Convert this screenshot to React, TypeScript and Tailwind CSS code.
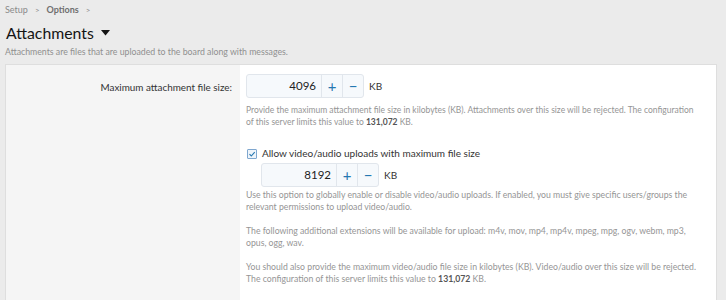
import React from "react";

const font = { fontFamily: 'Lato, "Open Sans", sans-serif' };

function NumberBox({ value }: { value: string }) {
  return (
    <div className="flex h-[24px] w-[118px] rounded-[3px] border border-[#e1e6ec] bg-[#f6f9fc]">
      <div className="flex flex-1 items-center justify-end pr-[5px] text-[11.5px] text-[#222]">{value}</div>
      <div className="flex w-[21px] items-center justify-center border-l border-[#e1e6ec] text-[15px] text-[#2577b1]">+</div>
      <div className="flex w-[21px] items-center justify-center border-l border-[#e1e6ec] text-[15px] text-[#2577b1]">−</div>
    </div>
  );
}

export default function App() {
  return (
    <div className="h-[300px] w-[726px] overflow-hidden bg-[#ebebeb]" style={font}>
      <div className="px-[5px] pt-[4px]">
        <div className="flex items-center gap-[7px] text-[9px] leading-[12px] text-[#8a8a8a]">
          <span>Setup</span>
          <span className="text-[8px]">&gt;</span>
          <span className="font-bold text-[#6f6f6f]">Options</span>
          <span className="text-[8px]">&gt;</span>
        </div>
        <div className="mt-[7px] flex items-center gap-[7px] pl-[1px] text-[15.8px] leading-[20px] text-[#141414]">
          <span>Attachments</span>
          <svg width="9" height="6" viewBox="0 0 9 6"><path d="M0 0h9L4.5 5.5z" fill="#141414" /></svg>
        </div>
        <div className="mt-[3px] text-[8.75px] leading-[12px] text-[#909090]">Attachments are files that are uploaded to the board along with messages.</div>
      </div>
      <div className="mx-[5px] mt-[6px] flex h-[240px] w-[712px] border border-[#dedede] bg-[#f5f5f5]">
        <div className="w-[234px] pt-[15px] pr-[8px] text-right text-[9.9px] text-[#333]">Maximum attachment file size:</div>
        <div className="flex-1 bg-white pl-[6px] pt-[9px] pr-[3px]">
          <div className="flex items-center gap-[5px]">
            <NumberBox value="4096" />
            <span className="text-[10px] text-[#333]">KB</span>
          </div>
          <div className="mt-[6px] pr-[11px] text-[8.5px] leading-[12px] text-[#959595]">
            Provide the maximum attachment file size in kilobytes (KB). Attachments over this size will be rejected. The configuration of this server limits this value to <b className="text-[#555]">131,072</b> KB.
          </div>
          <div className="mt-[18px] flex items-center gap-[5px] pl-[1px]">
            <div className="flex h-[10px] w-[10px] items-center justify-center rounded-[1px] border border-[#7fa7cf] bg-[#eef4fa]">
              <svg width="8" height="8" viewBox="0 0 8 8"><path d="M1.5 4.2l1.8 1.8 3.4-3.8" stroke="#2577b1" strokeWidth="1.1" fill="none" /></svg>
            </div>
            <span className="text-[10px] text-[#333]">Allow video/audio uploads with maximum file size</span>
          </div>
          <div className="ml-[15px] mt-[2px] flex items-center gap-[5px]">
            <NumberBox value="8192" />
            <span className="text-[10px] text-[#333]">KB</span>
          </div>
          <div className="mt-[2px] pr-[5px] text-[8.7px] leading-[12px] text-[#959595]">
            Use this option to globally enable or disable video/audio uploads. If enabled, you must give specific users/groups the relevant permissions to upload video/audio.
          </div>
          <div className="mt-[12px] pr-[5px] text-[8.7px] leading-[12px] text-[#959595]">
            The following additional extensions will be available for upload: m4v, mov, mp4, mp4v, mpeg, mpg, ogv, webm, mp3, opus, ogg, wav.
          </div>
          <div className="mt-[12px] pr-[5px] text-[8.7px] leading-[12px] text-[#959595]">
            You should also provide the maximum video/audio file size in kilobytes (KB). Video/audio over this size will be rejected. The configuration of this server limits this value to <b className="text-[#555]">131,072</b> KB.
          </div>
        </div>
      </div>
    </div>
  );
}
